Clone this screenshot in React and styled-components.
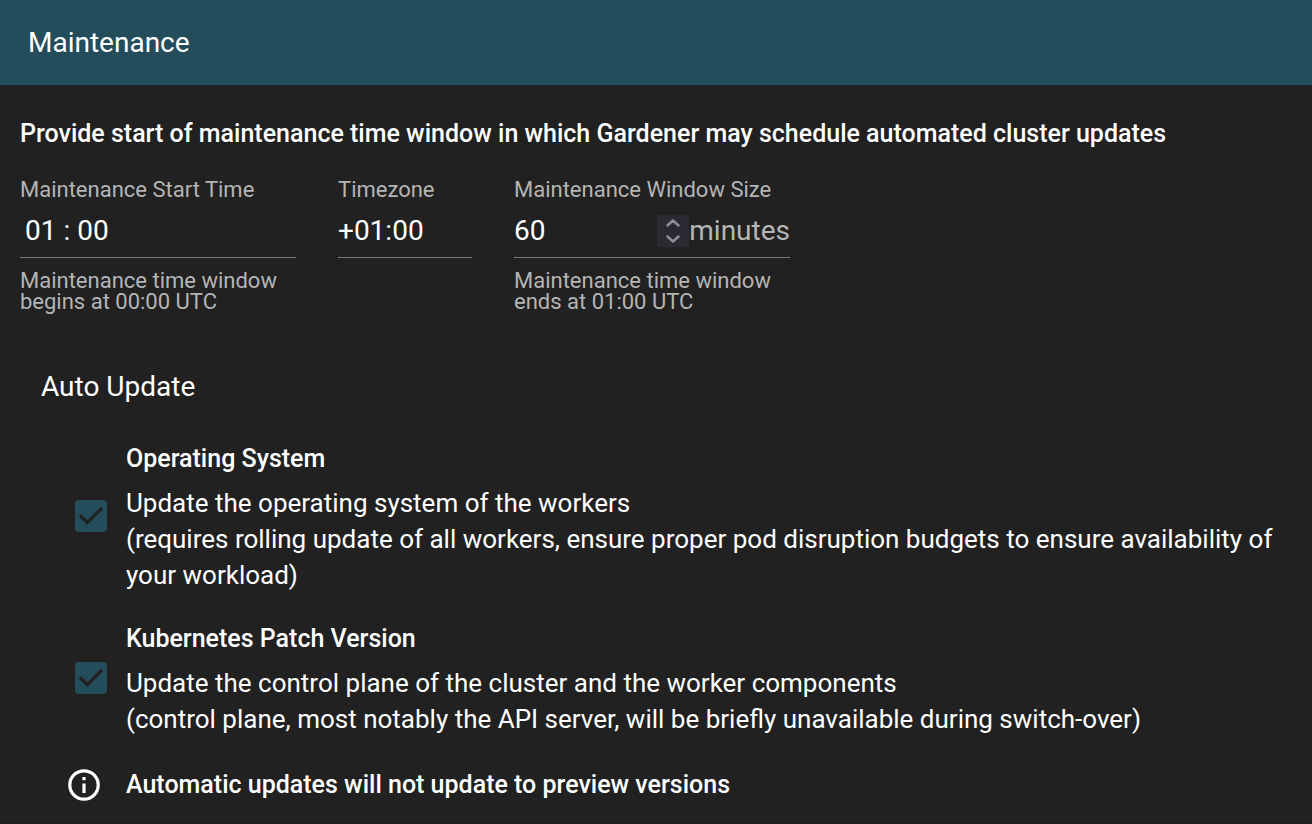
import React, { useState } from "react";
import styled, { createGlobalStyle } from "styled-components";

const GlobalStyle = createGlobalStyle`
  *, *::before, *::after { box-sizing: border-box; }
  body {
    margin: 0;
    background: #212121;
    color: #fff;
    font-family: Roboto, "Liberation Sans", sans-serif;
  }
`;

const Page = styled.main`
  min-height: 100vh;
  border-bottom: 2px solid #1f1d1f;
`;

const Toolbar = styled.header`
  display: flex;
  align-items: center;
  min-height: 85px;
  padding: 0 28px;
  background: #244d5b;
`;

const Title = styled.h1`
  margin: 0;
  font-size: 28px;
  line-height: 36px;
  font-weight: 400;
`;

const Content = styled.div`
  padding: 31px 20px 0;
`;

const Strong = styled.h3`
  margin: 0;
  font-size: 25px;
  line-height: 36px;
  font-weight: 500;
`;

const Fields = styled.form`
  display: flex;
  flex-wrap: wrap;
  align-items: flex-start;
  gap: 42px;
  margin-top: 26px;
`;

const Field = styled.div`
  display: flex;
  flex-direction: column;
  width: ${(p) => p.$width};
`;

const Label = styled.label`
  font-size: 22px;
  line-height: 24px;
  color: #b5b5b5;
  white-space: nowrap;
`;

const Control = styled.div`
  display: flex;
  align-items: center;
  height: 56px;
  padding: 2px 0 0 ${(p) => (p.$inset ? "5px" : "0")};
  border-bottom: 1px solid #7a7a7a;
`;

const Input = styled.input`
  flex: 1;
  min-width: 0;
  width: 100%;
  padding: 0;
  border: 0;
  outline: 0;
  background: transparent;
  color: #fff;
  font: 400 28px/36px Roboto, "Liberation Sans", sans-serif;
  appearance: textfield;

  &::-webkit-inner-spin-button,
  &::-webkit-outer-spin-button {
    appearance: none;
    margin: 0;
  }
`;

const Suffix = styled.span`
  font-size: 28px;
  line-height: 36px;
  color: #b5b5b5;
`;

const Spinner = styled.div`
  display: flex;
  flex-direction: column;
  width: 32px;
  background: #2b2a33;
`;

const SpinButton = styled.button`
  display: flex;
  justify-content: center;
  align-items: center;
  height: 16px;
  padding: 0;
  border: 0;
  background: transparent;
  color: #8f8d9c;
`;

const Hint = styled.p`
  margin: 12px 0 0;
  font-size: 22px;
  line-height: 21px;
  color: #b5b5b5;
`;

const Section = styled.section`
  margin-top: 57px;
`;

const SectionTitle = styled.h2`
  margin: 0 0 36px;
  padding-left: 21px;
  font-size: 28px;
  line-height: 36px;
  font-weight: 400;
`;

const Item = styled.div`
  display: grid;
  grid-template-columns: 32px 1fr;
  align-items: center;
  column-gap: 19px;
  padding: 0 0 0 55px;
  margin-bottom: 28px;
`;

const Note = styled(Item)`
  column-gap: 26px;
  padding: 2px 0 0 48px;
  margin: 0;
`;

const CheckWrap = styled.span`
  display: grid;
  width: 32px;
  height: 32px;
  margin-bottom: 3px;

  > * { grid-area: 1 / 1; }
  > svg { pointer-events: none; }
`;

const Check = styled.input`
  appearance: none;
  width: 32px;
  height: 32px;
  margin: 0;
  border: 2px solid #244d5b;
  border-radius: 4px;

  &:checked { background: #244d5b; }
  &:not(:checked) + svg { visibility: hidden; }
`;

const ItemText = styled.label`
  display: block;
`;

const Description = styled.p`
  margin: 8px 0 0;
  font-size: 26px;
  line-height: 36px;
`;

function Chevron({ up }) {
  return (
    <svg width="14" height="8" viewBox="0 0 14 8" fill="none" stroke="currentColor" strokeWidth="2.4" strokeLinecap="round" strokeLinejoin="round" aria-hidden="true">
      <path d={up ? "M1.5 6.5 7 1.5l5.5 5" : "M1.5 1.5 7 6.5l5.5-5"} />
    </svg>
  );
}

function UpdateOption({ id, title, lines }) {
  return (
    <Item>
      <CheckWrap>
        <Check type="checkbox" id={id} defaultChecked />
        <svg width="32" height="32" viewBox="0 0 32 32" fill="none" stroke="#212121" strokeWidth="3.4" aria-hidden="true">
          <path d="M5 15.4l7.3 7.2L27 8" />
        </svg>
      </CheckWrap>
      <ItemText htmlFor={id}>
        <Strong>{title}</Strong>
        <Description>
          {lines[0]}
          <br />
          {lines[1]}
        </Description>
      </ItemText>
    </Item>
  );
}

export default function App() {
  const [size, setSize] = useState(60);
  return (
    <>
      <GlobalStyle />
      <Page>
        <Toolbar>
          <Title>Maintenance</Title>
        </Toolbar>
        <Content>
          <Strong as="h2">
            Provide start of maintenance time window in which Gardener may schedule automated cluster updates
          </Strong>
          <Fields>
            <Field $width="276px">
              <Label htmlFor="start">Maintenance Start Time</Label>
              <Control $inset>
                <Input id="start" type="text" defaultValue="01 : 00" />
              </Control>
              <Hint>Maintenance time window begins at 00:00 UTC</Hint>
            </Field>
            <Field $width="134px">
              <Label htmlFor="zone">Timezone</Label>
              <Control>
                <Input id="zone" type="text" defaultValue="+01:00" />
              </Control>
            </Field>
            <Field $width="276px">
              <Label htmlFor="size">Maintenance Window Size</Label>
              <Control>
                <Input id="size" type="number" value={size} onChange={(e) => setSize(e.target.value)} />
                <Spinner>
                  <SpinButton type="button" aria-label="Increase" onClick={() => setSize(Number(size) + 1)}>
                    <Chevron up />
                  </SpinButton>
                  <SpinButton type="button" aria-label="Decrease" onClick={() => setSize(Number(size) - 1)}>
                    <Chevron />
                  </SpinButton>
                </Spinner>
                <Suffix>minutes</Suffix>
              </Control>
              <Hint>Maintenance time window ends at 01:00 UTC</Hint>
            </Field>
          </Fields>
          <Section>
            <SectionTitle>Auto Update</SectionTitle>
            <UpdateOption
              id="os"
              title="Operating System"
              lines={[
                "Update the operating system of the workers",
                "(requires rolling update of all workers, ensure proper pod disruption budgets to ensure availability of your workload)",
              ]}
            />
            <UpdateOption
              id="k8s"
              title="Kubernetes Patch Version"
              lines={[
                "Update the control plane of the cluster and the worker components",
                "(control plane, most notably the API server, will be briefly unavailable during switch-over)",
              ]}
            />
            <Note>
              <svg width="32" height="32" viewBox="0 0 32 32" fill="none" aria-hidden="true">
                <circle cx="16" cy="16" r="14.2" stroke="#fff" strokeWidth="3.2" />
                <path d="M14.4 8h3.2v3.2h-3.2zM14.4 14.4h3.2V24h-3.2z" fill="#fff" />
              </svg>
              <Strong>Automatic updates will not update to preview versions</Strong>
            </Note>
          </Section>
        </Content>
      </Page>
    </>
  );
}
